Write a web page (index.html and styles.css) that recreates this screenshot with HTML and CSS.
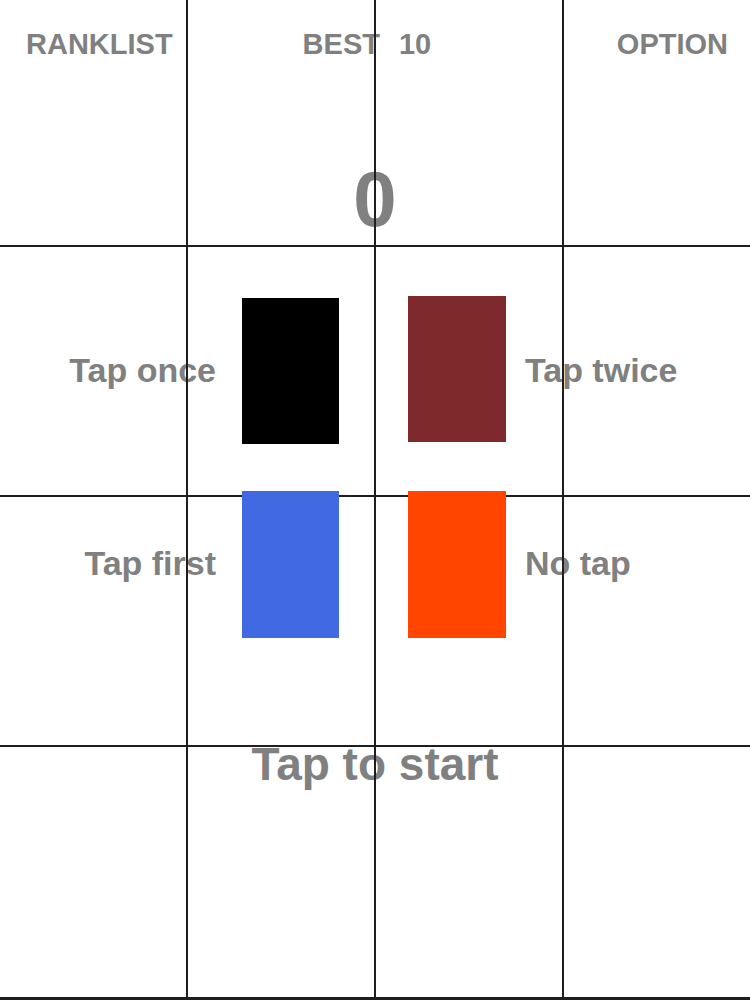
FILE: index.html
```html
<!DOCTYPE html>
<html lang="en">
<head>
<meta charset="utf-8">
<title>Tap game</title>
<link rel="stylesheet" href="styles.css">
</head>
<body>
<div class="board">
  <header class="top">
    <div class="menu">
      <span class="menu-item">RANKLIST</span>
      <span class="menu-item best">BEST<span class="best-num">10</span></span>
      <span class="menu-item option">OPTION</span>
    </div>
    <div class="score">0</div>
  </header>
  <main class="legend">
    <div class="legend-row row-one">
      <span class="label label-left">Tap once</span>
      <span class="tile tile-black"></span>
      <span class="spacer"></span>
      <span class="tile tile-maroon"></span>
      <span class="label label-right">Tap twice</span>
    </div>
    <div class="legend-row row-two">
      <span class="label label-left">Tap first</span>
      <span class="tile tile-blue"></span>
      <span class="spacer"></span>
      <span class="tile tile-orange"></span>
      <span class="label label-right">No tap</span>
    </div>
  </main>
  <footer class="start">Tap to start</footer>
</div>
</body>
</html>
```

FILE: styles.css
```css
html, body {
  margin: 0;
  padding: 0;
  background: #ffffff;
}

body {
  width: 750px;
  height: 1000px;
  overflow: hidden;
  font-family: "Liberation Sans", Arial, sans-serif;
  font-weight: bold;
  color: #808080;
}

.board {
  position: relative;
  width: 750px;
  height: 1000px;
  display: flex;
  flex-direction: column;
}

.board::after {
  content: "";
  position: absolute;
  inset: 0;
  pointer-events: none;
  z-index: 1;
  background-image:
    linear-gradient(90deg,
      transparent 186px, #1e1e1e 186px, #1e1e1e 188px,
      transparent 188px, transparent 374px, #1e1e1e 374px, #1e1e1e 376px,
      transparent 376px, transparent 562px, #1e1e1e 562px, #1e1e1e 564px,
      transparent 564px),
    linear-gradient(180deg,
      transparent 245px, #1e1e1e 245px, #1e1e1e 247px,
      transparent 247px, transparent 495px, #1e1e1e 495px, #1e1e1e 497px,
      transparent 497px, transparent 745px, #1e1e1e 745px, #1e1e1e 747px,
      transparent 747px, transparent 997px, #1e1e1e 997px);
}

.top {
  height: 246px;
  display: flex;
  flex-direction: column;
}

.menu {
  display: flex;
  align-items: baseline;
  padding: 28px 22px 0 26px;
  font-size: 29px;
  line-height: 33px;
}

.best {
  margin-left: 130px;
}

.best-num {
  margin-left: 19px;
}

.option {
  margin-left: auto;
}

.score {
  margin-top: 99px;
  text-align: center;
  font-size: 78px;
  line-height: 78px;
}

.legend {
  display: flex;
  flex-direction: column;
  padding-top: 50px;
}

.legend-row {
  display: grid;
  grid-template-columns: 242px 97px 69px 98px 1fr;
  align-items: center;
  font-size: 34px;
  line-height: 40px;
}

.row-one {
  height: 148px;
}

.row-two {
  height: 147px;
  margin-top: 47px;
}

.row-two .label {
  margin-bottom: 4px;
}

.label-left {
  text-align: right;
  padding-right: 26px;
}

.label-right {
  padding-left: 19px;
}

.tile {
  position: relative;
  z-index: 2;
  display: block;
  height: 147px;
}

.tile-black {
  background: #000000;
  align-self: end;
  height: 146px;
}

.tile-maroon {
  background: #7e2a2c;
  align-self: start;
  height: 146px;
}

.tile-blue {
  background: #4169e1;
}

.tile-orange {
  background: #ff4500;
}

.start {
  margin-top: 100px;
  text-align: center;
  font-size: 46px;
  line-height: 52px;
}
```
